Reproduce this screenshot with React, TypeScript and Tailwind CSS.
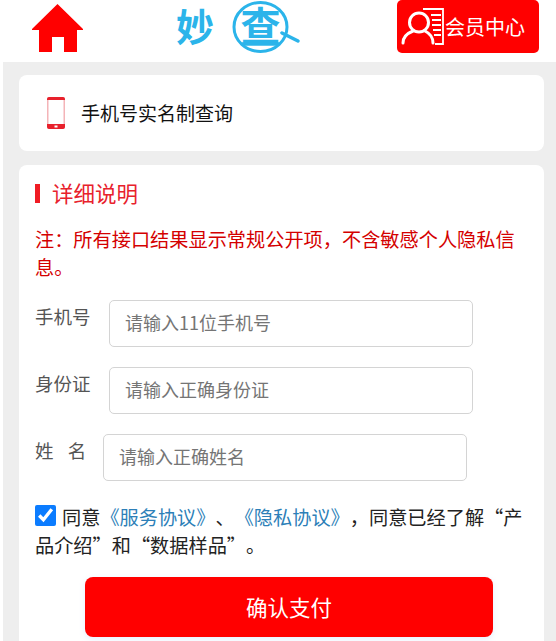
const font = { fontFamily: '"Noto Sans CJK SC", "Liberation Sans", sans-serif' }

function HomeIcon() {
  return (
    <svg width="51" height="48" viewBox="0 0 51 48" className="block">
      <path d="M25.5 0 L51 25 V26 H45 V48 H32 V33 H20 V48 H7 V26 H0 V25 Z" fill="#ff0000" />
    </svg>
  )
}

function SearchLogo() {
  return (
    <svg width="70" height="54" viewBox="0 0 70 54" className="block overflow-visible">
      <ellipse cx="28.5" cy="26" rx="26.5" ry="24.5" fill="none" stroke="#2bb4ea" strokeWidth="3" />
      <path d="M50 32 L66 40" stroke="#2bb4ea" strokeWidth="3.5" strokeLinecap="round" />
      <text x="28.5" y="39.5" textAnchor="middle" fontSize="40" fontWeight="700" fill="#2bb4ea">查</text>
      <path d="M10 43 H47" stroke="#2bb4ea" strokeWidth="3.5" />
    </svg>
  )
}

function MemberIcon() {
  return (
    <svg width="46" height="40" viewBox="0 0 46 40" className="block">
      <circle cx="19" cy="15.5" r="9.5" fill="none" stroke="#fff" strokeWidth="3" />
      <path d="M3 36 C3 29 8 26 13 24 M33 36 C33 29 29 26 25 24" fill="none" stroke="#fff" strokeWidth="3" strokeLinecap="round" />
      <path d="M23 2 H43 V37 H35" fill="none" stroke="#fff" strokeWidth="1.8" />
      <path d="M31 8 H41 M32 13 H41 M32 18 H41 M33 23 H41 M34 28 H41" stroke="#fff" strokeWidth="1.8" />
    </svg>
  )
}

function PhoneIcon() {
  return (
    <svg width="18" height="32" viewBox="0 0 18 32" className="block">
      <rect x="0.75" y="0.75" width="16.5" height="30.5" rx="2" fill="none" stroke="#f4b4b8" strokeWidth="1.5" />
      <path d="M2 0 H16 A2 2 0 0 1 18 2 V3 H0 V2 A2 2 0 0 1 2 0 Z" fill="#e8212c" />
      <path d="M0 27 H18 V30 A2 2 0 0 1 16 32 H2 A2 2 0 0 1 0 30 Z" fill="#e8212c" />
      <rect x="7.5" y="28.5" width="3" height="2" fill="#fff" />
    </svg>
  )
}

function Field({ label, placeholder, narrow }: { label: string; placeholder: string; narrow?: boolean }) {
  return (
    <div className={narrow ? 'flex h-[47px] items-start gap-[12px]' : 'flex h-[47px] items-start gap-[18px]'}>
      <span className="w-[56px] shrink-0 whitespace-nowrap pt-[3px] text-[18.5px] leading-[26px] text-[#555] [word-spacing:10px]">{label}</span>
      <input
        placeholder={placeholder}
        className="h-[47px] w-[364px] rounded-[5px] border border-[#d4d4d4] bg-white pb-[4px] pl-[15px] pr-[15px] text-[18px] placeholder:text-[#757575]"
      />
    </div>
  )
}

export default function App() {
  return (
    <div lang="zh-CN" className="h-[641px] w-[556px] overflow-hidden bg-white" style={font}>
      <header className="flex h-[62px] items-start">
        <div className="ml-[32px] mt-[4px]">
          <HomeIcon />
        </div>
        <div className="ml-[93px] flex items-start gap-[18px]">
          <span className="text-[38px] font-bold leading-[50px] text-[#2bb4ea]">妙</span>
          <div className="mt-[1px]">
            <SearchLogo />
          </div>
        </div>
        <div className="ml-[95px] flex h-[53px] w-[142px] items-center rounded-[5px] bg-[#ff0000] pl-[3px] text-[20px] text-white">
          <MemberIcon />
          <span className="-ml-[1px] whitespace-nowrap">会员中心</span>
        </div>
      </header>

      <main className="ml-[3px] h-[579px] bg-[#eeeeee] pl-[16px] pr-[12px] pt-[13px]">
        <section className="flex h-[76px] items-center rounded-lg bg-white pl-[28px]">
          <PhoneIcon />
          <span className="ml-[16px] text-[19px] text-[#111]">手机号实名制查询</span>
        </section>

        <section className="mt-[14px] h-[500px] rounded-lg bg-white px-[16px] pt-[13px]">
          <h2 className="flex items-center text-[21.5px] leading-[30px] text-[#e8212c]">
            <span className="mr-[12px] h-[19px] w-[5px] bg-[#f01c24]" />
            详细说明
          </h2>
          <p className="mt-[17px] text-[19.2px] leading-[28px] text-[#d40000]">注：所有接口结果显示常规公开项，不含敏感个人隐私信息。</p>

          <div className="mt-[19px] flex flex-col gap-[20px]">
            <Field label="手机号" placeholder="请输入11位手机号" />
            <Field label="身份证" placeholder="请输入正确身份证" />
            <Field label="姓 名" placeholder="请输入正确姓名" narrow />
          </div>

          <div className="mt-[22px] text-[19.2px] leading-[28px] text-[#222] [text-spacing-trim:space-all]">
            <input type="checkbox" defaultChecked className="mr-[6px] h-[21px] w-[21px] align-[-1px] accent-[#0b7cff]" />
            同意<span className="text-[#2d7fb8]">《服务协议》</span>、<span className="text-[#2d7fb8]">《隐私协议》</span>，同意已经了解“产品介绍”和“数据样品”。
          </div>

          <button className="ml-[50px] mt-[18px] block h-[60px] w-[408px] rounded-lg bg-[#ff0000] text-[21.5px] text-white shadow-[0_2px_6px_rgba(120,180,255,0.2)]">确认支付</button>
        </section>
      </main>
    </div>
  )
}
